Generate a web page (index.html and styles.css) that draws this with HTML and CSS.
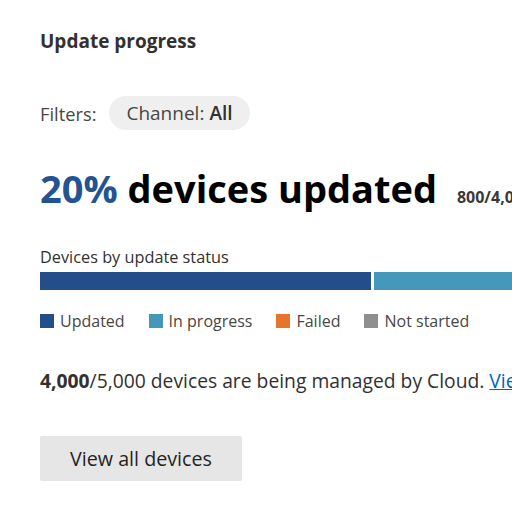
FILE: index.html
```html
<!DOCTYPE html>
<html lang="en">
<head>
<meta charset="utf-8">
<title>Update progress</title>
<link rel="stylesheet" href="styles.css">
</head>
<body>
<main class="card">
  <h2 class="title">Update progress</h2>
  <div class="filters">
    <span class="filters-label">Filters:</span>
    <span class="pill">Channel: <b>All</b></span>
  </div>
  <div class="headline">
    <span class="pct">20%</span> devices updated
    <span class="count">800/4,000</span>
  </div>
  <div class="bar-label">Devices by update status</div>
  <div class="bar">
    <div class="seg seg-updated"></div>
    <div class="seg seg-progress"></div>
  </div>
  <ul class="legend">
    <li><span class="sw sw-updated"></span>Updated</li>
    <li><span class="sw sw-progress"></span>In progress</li>
    <li><span class="sw sw-failed"></span>Failed</li>
    <li><span class="sw sw-not"></span>Not started</li>
  </ul>
  <p class="managed"><b>4,000</b>/5,000 devices are being managed by Cloud. <a href="#">View details</a></p>
  <button class="btn">View all devices</button>
</main>
</body>
</html>
```
FILE: styles.css
```css
html, body {
  margin: 0;
  padding: 0;
  background: #fff;
  overflow: hidden;
}
body {
  font-family: "Open Sans", "Noto Sans", sans-serif;
  color: #323130;
}
.card {
  padding: 29px 0 0 40px;
  width: 1000px;
  white-space: nowrap;
}
.title {
  margin: 0;
  font-size: 19px;
  line-height: 24px;
  font-weight: 700;
  color: #323130;
}
.filters {
  display: flex;
  align-items: center;
  height: 34px;
  margin-top: 43px;
  font-size: 18.3px;
}
.filters-label {
  color: #484644;
}
.pill {
  display: inline-flex;
  align-items: center;
  height: 34px;
  margin-left: 13px;
  padding: 0 17px;
  border-radius: 17px;
  background: #efefef;
  color: #484644;
  font-size: 19px;
}
.pill b {
  font-weight: 600;
  color: #323130;
  margin-left: 5px;
}
.headline {
  margin-top: 36px;
  font-size: 38px;
  line-height: 44px;
  font-weight: 700;
  color: #000;
}
.pct {
  color: #245392;
}
.count {
  margin-left: 10px;
  font-size: 16px;
  line-height: 1;
  color: #3b3a39;
}
.bar-label {
  margin-top: 37px;
  font-size: 16.3px;
  line-height: 20px;
  color: #323130;
}
.bar {
  display: flex;
  gap: 3px;
  margin-top: 5px;
  height: 18px;
}
.seg-updated {
  width: 331px;
  background: #234e8a;
}
.seg-progress {
  width: 600px;
  background: #4698bb;
}
.legend {
  display: flex;
  gap: 24px;
  list-style: none;
  margin: 21px 0 0;
  padding: 0;
  height: 20px;
  font-size: 16px;
  color: #484644;
}
.legend li {
  display: flex;
  align-items: center;
  gap: 6px;
}
.sw {
  width: 14px;
  height: 14px;
  display: inline-block;
}
.sw-updated { background: #234e8a; }
.sw-progress { background: #4698bb; }
.sw-failed { background: #e8742c; }
.sw-not { background: #8f8f8f; }
.managed {
  margin: 37px 0 0;
  font-size: 19.3px;
  line-height: 26px;
  color: #323130;
}
.managed b {
  font-weight: 700;
}
.managed a {
  color: #0067b8;
  text-decoration: underline;
}
.btn {
  display: block;
  margin-top: 42px;
  width: 202px;
  height: 45px;
  border: 0;
  border-radius: 2px;
  background: #e6e6e6;
  font-family: inherit;
  font-size: 19.7px;
  color: #252423;
  cursor: pointer;
}
```
